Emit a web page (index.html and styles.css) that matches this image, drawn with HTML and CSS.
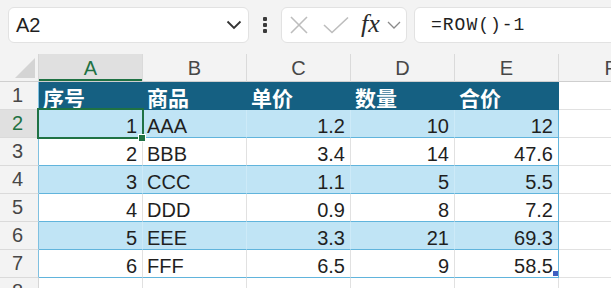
FILE: index.html
```html
<!DOCTYPE html>
<html>
<head>
<meta charset="utf-8">
<link rel="stylesheet" href="styles.css">
</head>
<body>
<div class="toolbar">
  <div class="namebox">
    <span>A2</span>
    <svg class="chev" width="16" height="10" viewBox="0 0 16 10"><path d="M1.5 1.5 L8 8 L14.5 1.5" fill="none" stroke="#333" stroke-width="1.8"/></svg>
  </div>
  <div class="more"><i></i><i></i><i></i></div>
  <div class="fbtns">
    <svg width="18" height="18" viewBox="0 0 18 18"><path d="M1 1 L17 17 M17 1 L1 17" stroke="#bdbdbd" stroke-width="1.6" fill="none"/></svg>
    <svg class="check" width="26" height="18" viewBox="0 0 26 18"><path d="M1 9 L9 16.5 L25 1.5" stroke="#bdbdbd" stroke-width="1.6" fill="none"/></svg>
    <span class="fx">fx</span>
    <svg class="fchev" width="14" height="8" viewBox="0 0 14 8"><path d="M1 1 L7 7 L13 1" fill="none" stroke="#8a8a8a" stroke-width="1.3"/></svg>
  </div>
  <div class="finput">=ROW()-1</div>
</div>
<div class="sheet">
  <div class="corner"><span class="tri"></span></div>
  <div class="ch sel">A</div><div class="ch">B</div><div class="ch">C</div><div class="ch">D</div><div class="ch">E</div><div class="ch">F</div>

  <div class="rh tb">1</div>
  <div class="c th">序号</div><div class="c th">商品</div><div class="c th">单价</div><div class="c th">数量</div><div class="c th last">合价</div><div class="c o"></div>

  <div class="rh tb sel">2</div>
  <div class="c b n">1</div><div class="c b">AAA</div><div class="c b n">1.2</div><div class="c b n">10</div><div class="c b n last">12</div><div class="c o"></div>

  <div class="rh tb">3</div>
  <div class="c w n">2</div><div class="c w">BBB</div><div class="c w n">3.4</div><div class="c w n">14</div><div class="c w n last">47.6</div><div class="c o"></div>

  <div class="rh tb">4</div>
  <div class="c b n">3</div><div class="c b">CCC</div><div class="c b n">1.1</div><div class="c b n">5</div><div class="c b n last">5.5</div><div class="c o"></div>

  <div class="rh tb">5</div>
  <div class="c w n">4</div><div class="c w">DDD</div><div class="c w n">0.9</div><div class="c w n">8</div><div class="c w n last">7.2</div><div class="c o"></div>

  <div class="rh tb">6</div>
  <div class="c b n">5</div><div class="c b">EEE</div><div class="c b n">3.3</div><div class="c b n">21</div><div class="c b n last">69.3</div><div class="c o"></div>

  <div class="rh tb">7</div>
  <div class="c w n">6</div><div class="c w">FFF</div><div class="c w n">6.5</div><div class="c w n">9</div><div class="c w n last">58.5</div><div class="c o"></div>

  <div class="rh">8</div>
  <div class="c o"></div><div class="c o"></div><div class="c o"></div><div class="c o"></div><div class="c o"></div><div class="c o"></div>

  <div class="selbox"></div>
  <div class="fillhandle"></div>
  <div class="resize"></div>
</div>
</body>
</html>
```
FILE: styles.css
```css
* { box-sizing: border-box; margin: 0; padding: 0; }
html, body {
  width: 611px;
  height: 288px;
  overflow: hidden;
  background: #f3f3f3;
  font-family: "Liberation Sans", Arial, sans-serif;
}
.toolbar {
  display: flex;
  align-items: flex-start;
  height: 54px;
  padding: 7px 0 0 8px;
}
.namebox {
  width: 241px;
  height: 36px;
  flex: none;
  background: #fff;
  border: 1px solid #e2e2e2;
  border-radius: 6px;
  display: flex;
  align-items: center;
  justify-content: space-between;
  padding: 0 6px 0 7px;
  font-size: 20px;
  color: #1f1f1f;
}
.more {
  width: 32px;
  height: 36px;
  flex: none;
  display: flex;
  flex-direction: column;
  align-items: center;
  justify-content: center;
  gap: 2px;
}
.more i {
  display: block;
  width: 4px;
  height: 4px;
  border-radius: 1px;
  background: #3a3a3a;
}
.fbtns {
  width: 126px;
  height: 36px;
  flex: none;
  background: #fff;
  border: 1px solid #e2e2e2;
  border-radius: 6px;
  display: flex;
  align-items: center;
  padding-left: 8px;
}
.fbtns .check { margin-left: 15px; }
.fx {
  font-family: "Liberation Serif", "Times New Roman", serif;
  font-style: italic;
  font-size: 26px;
  color: #2b2b2b;
  margin-left: 12px;
  line-height: 1;
  margin-top: -3px;
}
.fchev { margin-left: 7px; }
.finput {
  margin-left: 7px;
  width: 240px;
  flex: none;
  height: 36px;
  background: #fff;
  border: 1px solid #e2e2e2;
  border-radius: 6px;
  font-family: "Liberation Mono", "DejaVu Sans Mono", monospace;
  font-size: 18px;
  letter-spacing: 1px;
  color: #1f1f1f;
  padding-left: 16px;
  display: flex;
  align-items: center;
}

.sheet {
  position: relative;
  display: grid;
  grid-template-columns: 39px repeat(6, 104px);
  grid-auto-rows: 28px;
  font-size: 20px;
  color: #1f1f1f;
}
.corner {
  position: relative;
  border-right: 1px solid #d6d6d6;
  border-bottom: 1px solid #cfcfcf;
}
.tri {
  position: absolute;
  right: 3px;
  bottom: 3px;
  width: 0;
  height: 0;
  border-left: 20px solid transparent;
  border-bottom: 20px solid #d4d4d4;
}
.ch {
  border-right: 1px solid #dadada;
  border-bottom: 1px solid #cfcfcf;
  text-align: center;
  line-height: 27px;
  color: #474747;
  padding-top: 1px;
}
.ch.sel {
  background: #e0e0e0;
  color: #1f7244;
  box-shadow: inset 0 -2px 0 #1f7244;
}
.rh {
  border-right: 1px solid #d6d6d6;
  border-bottom: 1px solid #dadada;
  text-align: center;
  line-height: 27px;
  color: #474747;
  padding-right: 3px;
}
.rh.tb { border-right-color: #7fc0e0; }
.rh.sel {
  background: #e0e0e0;
  color: #1f7244;
}
.c {
  display: flex;
  align-items: flex-end;
  line-height: 21px;
  padding: 0 4px;
  white-space: nowrap;
}
.n { justify-content: flex-end; padding-right: 5px; }
.th {
  background: #156082;
  color: #fff;
  font-family: "Noto Sans CJK SC", "Noto Sans", sans-serif;
  font-weight: 700;
  font-size: 21px;
  line-height: 24px;
  align-items: center;
  padding-top: 2px;
  border-right: 1px solid #156082;
  border-bottom: 1px solid #156082;
}
.b {
  background: #c0e4f5;
  border-right: 1px solid #cdeaf8;
  border-bottom: 1px solid #61b4dc;
}
.w {
  background: #fff;
  border-right: 1px solid #e1e1e1;
  border-bottom: 1px solid #61b4dc;
}
.c.last { border-right-color: #61b4dc; }
.th.last { border-right-color: #156082; }
.o {
  background: #fff;
  border-right: 1px solid #e1e1e1;
  border-bottom: 1px solid #e1e1e1;
}
.selbox {
  position: absolute;
  left: 37px;
  top: 54px;
  width: 107px;
  height: 31px;
  border: 2px solid #1f7244;
  pointer-events: none;
}
.fillhandle {
  position: absolute;
  left: 138px;
  top: 80px;
  width: 8px;
  height: 8px;
  background: #1f7244;
  border: 1px solid #fff;
}
.resize {
  position: absolute;
  left: 553px;
  top: 217px;
  width: 5px;
  height: 5px;
  background: #3f5fc2;
}
```
